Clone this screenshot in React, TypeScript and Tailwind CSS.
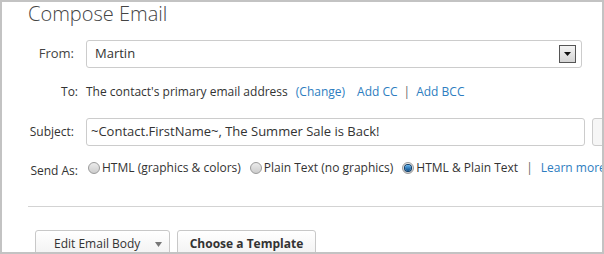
const Radio = ({ checked }: { checked?: boolean }) => (
  <span className="relative inline-flex h-[12px] w-[12px] shrink-0 items-center justify-center rounded-full border border-[#9a9a9a] bg-gradient-to-b from-[#ececec] to-[#cdcdcd]">
    {checked && <span className="h-[6px] w-[6px] rounded-full bg-gradient-to-b from-[#5fb3f0] to-[#0a4f8c] ring-1 ring-[#0b3a66]" />}
  </span>
);

const App = () => {
  return (
    <div
      className="h-[254px] w-[604px] overflow-hidden border-2 border-[#c3c3c3] bg-white text-[12px] text-[#333]"
      style={{ fontFamily: '"Open Sans", "Liberation Sans", sans-serif' }}
    >
      <h1 className="ml-[26px] text-[20px] font-light leading-[24px] text-[#444]">Compose Email</h1>

      {/* From */}
      <div className="mt-[14px] flex items-center">
        <label className="w-[72px] shrink-0 text-right text-[13px] text-[#444]">From:</label>
        <div className="ml-[12px] flex h-[28px] w-[496px] shrink-0 items-center justify-between rounded-[3px] border border-[#cccccc] pl-[8px] pr-[5px] text-[13px]">
          <span>Martin</span>
          <span className="flex h-[18px] w-[17px] items-center justify-center border border-[#555] bg-gradient-to-b from-[#f4f4f4] to-[#d4d4d4]">
            <svg width="7" height="4" viewBox="0 0 7 4">
              <path d="M0 0h7L3.5 4z" fill="#111" />
            </svg>
          </span>
        </div>
      </div>

      {/* To */}
      <div className="mt-[14px] flex items-center whitespace-nowrap leading-[20px]">
        <span className="w-[76px] shrink-0 text-right">To:</span>
        <span className="ml-[8px]">The contact's primary email address</span>
        <a className="ml-[8px] text-[#2d7dc0]">(Change)</a>
        <a className="ml-[12px] text-[#2d7dc0]">Add CC</a>
        <span className="mx-[6px] text-[#666]">|</span>
        <a className="text-[#2d7dc0]">Add BCC</a>
      </div>

      {/* Subject */}
      <div className="mt-[16px] flex items-center">
        <label className="w-[72px] shrink-0 text-right">Subject:</label>
        <div className="ml-[12px] flex h-[28px] w-[499px] shrink-0 items-center rounded-[3px] border border-[#cccccc] pl-[4px] text-[13px]">
          ~Contact.FirstName~, The Summer Sale is Back!
        </div>
        <div className="ml-[7px] h-[28px] w-[40px] shrink-0 rounded-[3px] border border-[#cccccc] bg-[#f6f6f6]" />
      </div>

      {/* Send As */}
      <div className="mt-[12px] flex h-[20px] items-center whitespace-nowrap leading-[20px]">
        <span className="relative top-[3px] w-[76px] shrink-0 text-right">Send As:</span>
        <div className="ml-[10px] flex shrink-0 items-center gap-[2px]">
          <Radio />
          <span>HTML (graphics &amp; colors)</span>
        </div>
        <div className="ml-[9px] flex shrink-0 items-center gap-[2px]">
          <Radio />
          <span>Plain Text (no graphics)</span>
        </div>
        <div className="ml-[9px] flex shrink-0 items-center gap-[2px]">
          <Radio checked />
          <span>HTML &amp; Plain Text</span>
        </div>
        <span className="mx-[8px] shrink-0 text-[#666]">|</span>
        <a className="shrink-0 text-[#2d7dc0]">Learn more</a>
      </div>

      <div className="ml-[26px] mt-[28px] h-px bg-[#d3d3d3]" />

      {/* Buttons */}
      <div className="ml-[33px] mt-[23px] flex gap-[7px]">
        <button className="flex h-[28px] w-[135px] items-center gap-[15px] rounded-t-[3px] border border-[#c8c8c8] bg-gradient-to-b from-white to-[#f1f1f1] pl-[18px] text-[#333]">
          Edit Email Body
          <svg width="7" height="5" viewBox="0 0 7 5">
            <path d="M0 0h7L3.5 5z" fill="#777" />
          </svg>
        </button>
        <button className="flex h-[28px] w-[139px] items-center justify-center rounded-t-[3px] border border-[#c8c8c8] bg-gradient-to-b from-white to-[#f1f1f1] font-bold text-[#333]">
          Choose a Template
        </button>
      </div>
    </div>
  );
};

export default App;
